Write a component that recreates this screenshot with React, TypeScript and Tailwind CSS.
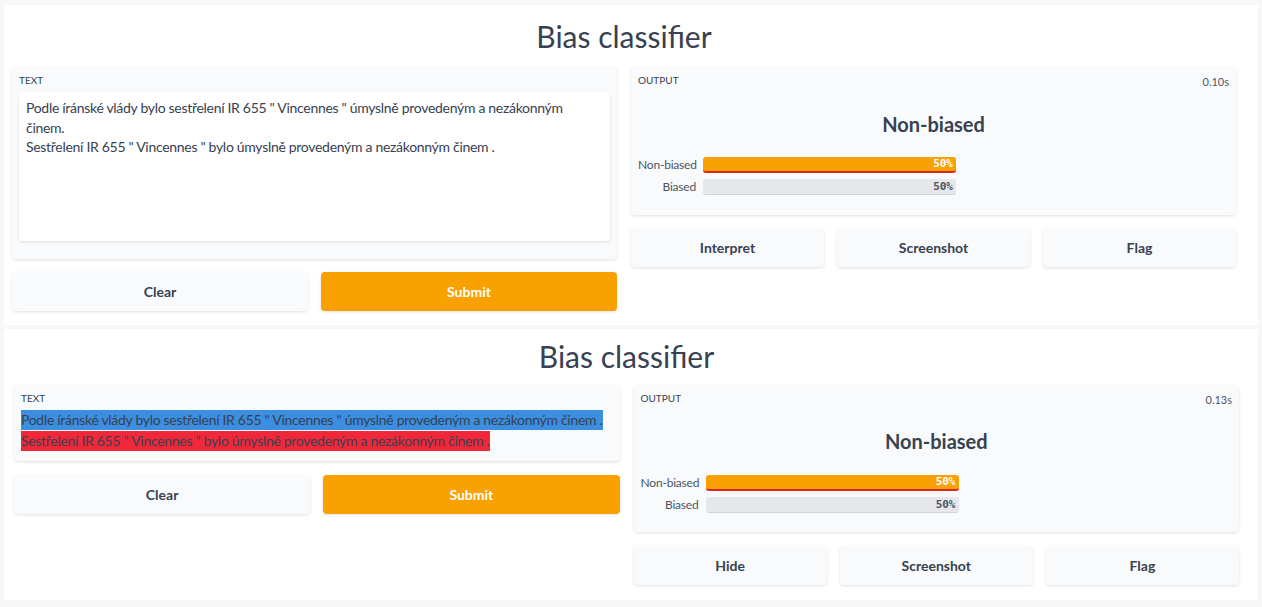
import React from "react";

function Btn({ children, primary }: { children: React.ReactNode; primary?: boolean }) {
  return (
    <div
      className={
        primary
          ? "h-[39px] rounded-[4px] bg-[#f8a100] text-white font-bold text-[14px] flex items-center justify-center shadow-[0_1px_3px_rgba(0,0,0,0.12)]"
          : "h-[39px] rounded-[4px] bg-[#f9fafb] text-[#374151] font-bold text-[14px] flex items-center justify-center shadow-[0_1px_3px_rgba(0,0,0,0.12)]"
      }
    >
      {children}
    </div>
  );
}

function Output({ time, headMt, barsMt }: { time: string; headMt: string; barsMt: string }) {
  return (
    <div className="rounded-[4px] bg-[#f9fafb] shadow-[0_1px_3px_rgba(0,0,0,0.12)] px-[7px] pt-[6px] h-full">
      <div className="flex justify-between items-start">
        <div className="text-[10px] leading-[14px] text-[#374151]">OUTPUT</div>
        <div className="text-[11px] leading-[14px] mt-[2px] text-[#4b5563]">{time}</div>
      </div>
      <div className={"text-center text-[20px] leading-[28px] font-bold text-[#374151] " + headMt}>Non-biased</div>
      <div className={"flex flex-col gap-[6px] " + barsMt}>
        <div className="flex items-center">
          <div className="w-[58px] text-right text-[12px] leading-[16px] whitespace-nowrap text-[#4b5563] tracking-[-0.2px]">Non-biased</div>
          <div className="ml-[7px] w-[253px] h-[16px] rounded-[3px] bg-[#f8a100] border-b-2 border-[#dc2626] flex items-center justify-end pr-[3px]">
            <span className="font-['DejaVu_Sans_Mono',monospace] font-bold text-[11px] leading-[14px] text-white">50%</span>
          </div>
        </div>
        <div className="flex items-center">
          <div className="w-[58px] text-right text-[12px] leading-[16px] whitespace-nowrap text-[#4b5563] tracking-[-0.2px]">Biased</div>
          <div className="ml-[7px] w-[253px] h-[16px] rounded-[3px] bg-[#e5e7eb] border-b border-[#d1d5db] flex items-center justify-end pr-[3px]">
            <span className="font-['DejaVu_Sans_Mono',monospace] font-bold text-[11px] leading-[14px] text-[#4b5563]">50%</span>
          </div>
        </div>
      </div>
    </div>
  );
}

export default function App() {
  return (
    <div className="min-h-screen bg-[#f7f7f7] font-['Lato',sans-serif] text-[#374151] pt-[5px] px-[4px]">
      {/* Panel 1 */}
      <div className="h-[320px] bg-white pt-[13px] pl-[8px] pr-[22px]">
        <div className="text-center text-[30px] leading-[36px] text-[#374151]">Bias classifier</div>
        <div className="mt-[13px] grid grid-cols-2 gap-[14px]">
          <div>
            <div className="h-[192px] rounded-[4px] bg-[#f9fafb] shadow-[0_1px_3px_rgba(0,0,0,0.12)] px-[7px] pt-[6px]">
              <div className="text-[10px] leading-[14px]">TEXT</div>
              <div className="mt-[5px] h-[149px] rounded-[4px] bg-white shadow-[0_1px_3px_rgba(0,0,0,0.12)] px-[7px] pt-[6px] text-[14px] leading-[19.5px] tracking-[-0.3px] whitespace-nowrap">
                <div>Podle íránské vlády bylo sestřelení IR 655 " Vincennes " úmyslně provedeným a nezákonným</div>
                <div>činem.</div>
                <div>Sestřelení IR 655 " Vincennes " bylo úmyslně provedeným a nezákonným činem .</div>
              </div>
            </div>
            <div className="mt-[13px] grid grid-cols-2 gap-[13px]">
              <Btn>Clear</Btn>
              <Btn primary>Submit</Btn>
            </div>
          </div>
          <div>
            <div className="h-[148px]">
              <Output time="0.10s" headMt="mt-[21px]" barsMt="mt-[19px]" />
            </div>
            <div className="mt-[13px] grid grid-cols-3 gap-[13px]">
              <Btn>Interpret</Btn>
              <Btn>Screenshot</Btn>
              <Btn>Flag</Btn>
            </div>
          </div>
        </div>
      </div>
      {/* Panel 2 */}
      <div className="mt-[4px] h-[271px] bg-white pt-[9px] pl-[10px] pr-[19px]">
        <div className="text-center text-[30px] leading-[36px] text-[#374151]">Bias classifier</div>
        <div className="mt-[11px] grid grid-cols-2 gap-[14px]">
          <div>
            <div className="h-[76px] rounded-[4px] bg-[#f9fafb] shadow-[0_1px_3px_rgba(0,0,0,0.12)] px-[7px] pt-[6px]">
              <div className="text-[10px] leading-[14px]">TEXT</div>
              <div className="mt-[4px] text-[14px] tracking-[-0.3px] whitespace-nowrap">
                <div>
                  <span className="inline-block leading-[19.5px] bg-[#3b8ee0]">Podle íránské vlády bylo sestřelení IR 655 " Vincennes " úmyslně provedeným a nezákonným činem .</span>
                </div>
                <div>
                  <span className="inline-block leading-[19.5px] bg-[#f0283a]">Sestřelení IR 655 " Vincennes " bylo úmyslně provedeným a nezákonným činem .</span>
                </div>
              </div>
            </div>
            <div className="mt-[14px] grid grid-cols-2 gap-[13px]">
              <Btn>Clear</Btn>
              <Btn primary>Submit</Btn>
            </div>
          </div>
          <div>
            <div className="h-[147px]">
              <Output time="0.13s" headMt="mt-[20px]" barsMt="mt-[20px]" />
            </div>
            <div className="mt-[14px] grid grid-cols-3 gap-[13px]">
              <Btn>Hide</Btn>
              <Btn>Screenshot</Btn>
              <Btn>Flag</Btn>
            </div>
          </div>
        </div>
      </div>
    </div>
  );
}
